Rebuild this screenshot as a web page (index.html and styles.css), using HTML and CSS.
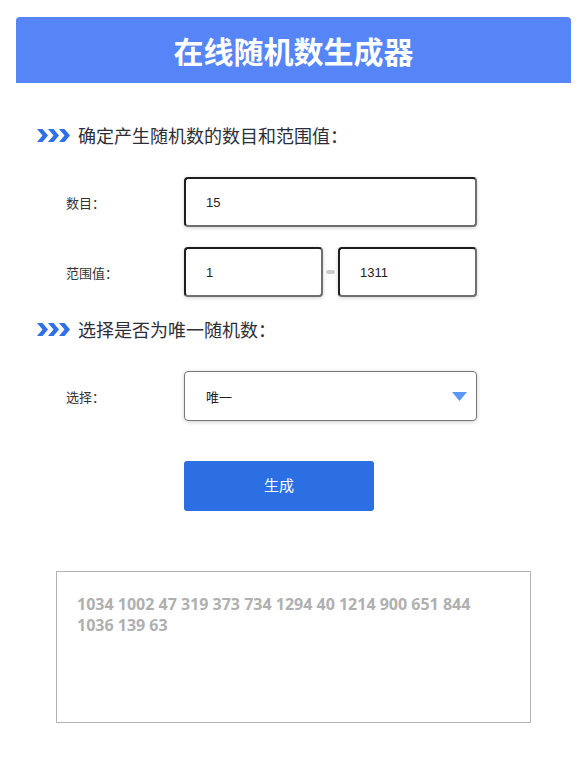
FILE: index.html
```html
<!DOCTYPE html>
<html lang="zh-CN">
<head>
<meta charset="utf-8">
<title>在线随机数生成器</title>
<link rel="stylesheet" href="styles.css">
</head>
<body>
<div class="page">
  <header class="banner"><h1 class="banner-title">在线随机数生成器</h1></header>

  <h2 class="sec-title sec-first">
    <svg class="chev" width="33" height="13" viewBox="0 0 33 13"><polygon points="0,0 5.5,0 11,6.5 5.5,13 0,13 5.5,6.5"/><polygon points="11,0 16.5,0 22,6.5 16.5,13 11,13 16.5,6.5"/><polygon points="22,0 27.5,0 33,6.5 27.5,13 22,13 27.5,6.5"/></svg>
    <span>确定产生随机数的数目和范围值：</span>
  </h2>

  <div class="row row-first">
    <div class="label">数目：</div>
    <div class="field"><div class="input">15</div></div>
  </div>
  <div class="row row-next">
    <div class="label">范围值：</div>
    <div class="field range">
      <div class="input">1</div>
      <div class="dash"></div>
      <div class="input">1311</div>
    </div>
  </div>

  <h2 class="sec-title sec-second">
    <svg class="chev" width="33" height="13" viewBox="0 0 33 13"><polygon points="0,0 5.5,0 11,6.5 5.5,13 0,13 5.5,6.5"/><polygon points="11,0 16.5,0 22,6.5 16.5,13 11,13 16.5,6.5"/><polygon points="22,0 27.5,0 33,6.5 27.5,13 22,13 27.5,6.5"/></svg>
    <span>选择是否为唯一随机数：</span>
  </h2>

  <div class="row row-first">
    <div class="label">选择：</div>
    <div class="field"><div class="select"><span>唯一</span><svg class="caret" width="15" height="9" viewBox="0 0 15 9"><polygon points="0,0 15,0 7.5,9"/></svg></div></div>
  </div>

  <div class="row row-button">
    <div class="label"></div>
    <div class="field"><div class="btn">生成</div></div>
  </div>

  <div class="result">1034 1002 47 319 373 734 1294 40 1214 900 651 844 1036 139 63</div>
</div>
</body>
</html>
```

FILE: styles.css
```css
html, body {
  margin: 0;
  padding: 0;
  background: #ffffff;
}
body {
  font-family: "Liberation Sans", "Noto Sans CJK SC", sans-serif;
  color: #333;
}
.page {
  width: 555px;
  margin-left: 16px;
  padding-top: 17px;
}
.banner {
  height: 66px;
  background: #5585f6;
  border-radius: 4px 4px 0 0;
  display: flex;
  align-items: center;
  justify-content: center;
}
.banner-title {
  margin: 0;
  font-family: "Noto Sans CJK SC", sans-serif;
  font-weight: 700;
  font-size: 30px;
  line-height: 40px;
  color: #ffffff;
}
.sec-title {
  margin: 0;
  display: flex;
  align-items: center;
  padding-left: 21px;
  height: 24px;
  font-family: "Noto Sans CJK SC", sans-serif;
  font-weight: 400;
  font-size: 18px;
  line-height: 24px;
  color: #2e2e38;
}
.sec-first { margin-top: 40px; }
.sec-second { margin-top: 20px; }
.chev {
  fill: #2f6fe8;
  margin-right: 8px;
  flex: none;
}
.row {
  display: flex;
  align-items: center;
}
.row-first { margin-top: 30px; }
.row-next { margin-top: 20px; }
.row-button { margin-top: 40px; }
.label {
  width: 118px;
  padding-left: 50px;
  font-family: "Noto Sans CJK SC", sans-serif;
  font-size: 13px;
  color: #333;
}
.field {
  width: 293px;
  display: flex;
  align-items: center;
}
.input {
  box-sizing: border-box;
  flex: 1;
  height: 50px;
  display: flex;
  align-items: center;
  padding-left: 20px;
  border: 2px solid #6f6f6f;
  border-top-color: #1e1e1e;
  border-left-color: #1e1e1e;
  border-radius: 4px;
  box-shadow: 0 1px 4px rgba(0, 0, 0, 0.18);
  font-family: "Liberation Sans", sans-serif;
  font-size: 13px;
  color: #222;
  background: #fff;
}
.range .input { flex: 0 0 139px; }
.dash {
  width: 9px;
  height: 4px;
  margin: 0 3px;
  border-radius: 2px;
  background: #cccccc;
}
.select {
  box-sizing: border-box;
  flex: 1;
  height: 50px;
  display: flex;
  align-items: center;
  justify-content: space-between;
  padding: 0 9px 0 21px;
  border: 1px solid #777;
  border-radius: 4px;
  box-shadow: 0 1px 4px rgba(0, 0, 0, 0.2);
  font-family: "Noto Sans CJK SC", sans-serif;
  font-size: 13px;
  color: #222;
}
.caret { fill: #5b97f6; }
.btn {
  width: 190px;
  height: 50px;
  display: flex;
  align-items: center;
  justify-content: center;
  background: #2c6fe2;
  border-radius: 3px;
  color: #fff;
  font-family: "Noto Sans CJK SC", sans-serif;
  font-size: 15px;
  line-height: 20px;
  padding-bottom: 3px;
  box-sizing: border-box;
}
.result {
  box-sizing: border-box;
  width: 475px;
  height: 152px;
  margin: 60px 0 0 40px;
  padding: 22px 20px 0 20px;
  border: 1px solid #b3b3b3;
  font-family: "Open Sans", sans-serif;
  font-weight: 700;
  font-size: 16px;
  line-height: 21px;
  color: #b0b0b0;
}
```
